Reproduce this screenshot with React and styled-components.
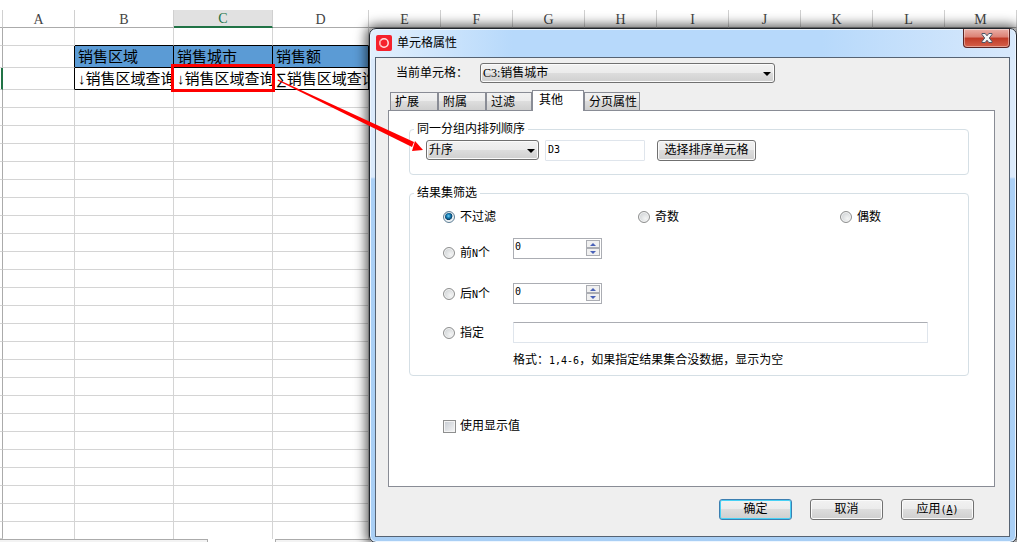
import React, { useState } from 'react'
import styled, { createGlobalStyle, css } from 'styled-components'

const columns = [
  { name: 'A', width: 72 },
  { name: 'B', width: 99 },
  { name: 'C', width: 99, active: true },
  { name: 'D', width: 96 },
  ...'EFGHIJKLM'.split('').map(name => ({ name, width: 72 }))
]

const headings = { B: '销售区域', C: '销售城市', D: '销售额' }
const formulas = { B: '↓销售区域查询', C: '↓销售区域查询', D: '∑销售区域查询' }
const emptyRows = Array.from({ length: 25 }, (_, i) => i)

const tabs = [
  { name: '扩展', width: 48 },
  { name: '附属', width: 48 },
  { name: '过滤', width: 46 },
  { name: '其他', width: 52 },
  { name: '分页属性', width: 56 }
]

const Sheet = () => (
  <SheetArea>
    <Grid>
      <colgroup>
        <col style={{ width: 3 }} />
        {columns.map(col => <col key={col.name} style={{ width: col.width }} />)}
      </colgroup>
      <thead>
        <tr>
          <ColumnHead />
          {columns.map(col => (
            <ColumnHead key={col.name} $active={col.active}>{col.name}</ColumnHead>
          ))}
        </tr>
      </thead>
      <tbody>
        <tr>
          <Stub />
          {columns.map(col => <Cell key={col.name} $dark={!!headings[col.name]} />)}
        </tr>
        <tr>
          <Stub />
          {columns.map(col => (
            <Cell key={col.name} $tall $filled={!!headings[col.name]} $dark={!!headings[col.name]} $edge={col.name in headings || col.name === 'A'}>
              <CellText>{headings[col.name]}</CellText>
            </Cell>
          ))}
        </tr>
        <tr>
          <Stub $active />
          {columns.map(col => (
            <Cell key={col.name} $tall $dark={!!formulas[col.name]} $edge={col.name in formulas || col.name === 'A'} $marked={col.active}>
              <CellText>{formulas[col.name]}</CellText>
            </Cell>
          ))}
        </tr>
        {emptyRows.map(row => (
          <tr key={row}>
            <Stub />
            {columns.map(col => <Cell key={col.name} $last={row === emptyRows.length - 1} />)}
          </tr>
        ))}
      </tbody>
    </Grid>
    <SheetTabs>
      <SheetTab $first />
      <SheetTab />
    </SheetTabs>
  </SheetArea>
)

const Combo = ({ id, label, width, options }) => (
  <ComboBox $width={width}>
    <select id={id} aria-label={label}>
      {options.map(option => <option key={option}>{option}</option>)}
    </select>
  </ComboBox>
)

const Spinner = ({ label }) => {
  const [value, setValue] = useState(0)

  return (
    <SpinBox>
      <input
        type="number"
        aria-label={label}
        value={value}
        onChange={e => setValue(Number(e.target.value))}
      />
      <SpinButtons>
        <SpinButton type="button" aria-label="增加" onClick={() => setValue(value + 1)}>
          <svg width="6" height="3" viewBox="0 0 6 3"><path d="M0 3 3 0 6 3z" /></svg>
        </SpinButton>
        <SpinButton type="button" aria-label="减少" onClick={() => setValue(Math.max(0, value - 1))}>
          <svg width="6" height="3" viewBox="0 0 6 3"><path d="M0 0h6L3 3z" /></svg>
        </SpinButton>
      </SpinButtons>
    </SpinBox>
  )
}

const Option = ({ value, filter, onSelect, children }) => (
  <Choice>
    <Radio name="filter" checked={filter === value} onChange={() => onSelect(value)} />
    <span>{children}</span>
  </Choice>
)

const CellDialog = () => {
  const [tab, setTab] = useState('其他')
  const [filter, setFilter] = useState('all')
  const option = { filter, onSelect: setFilter }

  return (
    <Dialog role="dialog" aria-labelledby="dialog-title">
      <TitleBar>
        <Logo viewBox="0 0 16 16" aria-hidden="true">
          <rect width="16" height="16" rx="2" fill="#f5222d" />
          <circle cx="8" cy="8" r="4.2" fill="none" stroke="#ffe3e3" strokeWidth="1.5" />
          <path d="M5.6 4.8a4 4 0 0 0 0 6.4" fill="none" stroke="#f88" strokeWidth="1" />
        </Logo>
        <Title id="dialog-title">单元格属性</Title>
        <Close type="button" aria-label="关闭">
          <svg width="12" height="10" viewBox="0 0 12 10">
            <path
              d="M1 .5h3.2L6 2.8 7.8.5H11v1L8.3 5 11 8.500v1H7.800L6 7.200 4.200 9.500H1v-1L3.700 5 1 1.500z"
              fill="#f4f4f4"
              stroke="#4c5566"
            />
          </svg>
        </Close>
      </TitleBar>
      <Client>
        <CurrentCell>
          <label htmlFor="current-cell">当前单元格：</label>
          <Combo id="current-cell" width={295} options={['C3:销售城市']} />
        </CurrentCell>
        <TabBar role="tablist">
          {tabs.map(({ name, width }) => (
            <Tab
              key={name}
              type="button"
              role="tab"
              aria-selected={tab === name}
              $width={width}
              $selected={tab === name}
              onClick={() => setTab(name)}
            >
              {name}
            </Tab>
          ))}
        </TabBar>
        <Panel>
          <Group>
            <legend>同一分组内排列顺序</legend>
            <SortRow>
              <Combo label="排列顺序" width={113} options={['升序', '降序']} />
              <TextInput $width={100} aria-label="排序单元格" defaultValue="D3" />
              <Button $width={99} type="button">选择排序单元格</Button>
            </SortRow>
          </Group>
          <Group>
            <legend>结果集筛选</legend>
            <Choices>
              <Option value="all" {...option}>不过滤</Option>
              <Option value="odd" {...option}>奇数</Option>
              <Option value="even" {...option}>偶数</Option>
            </Choices>
            <FieldRow $height={30} $gap={11}>
              <Option value="first" {...option}>前<Latin>N</Latin>个</Option>
              <Spinner label="前N个" />
            </FieldRow>
            <FieldRow $height={21} $gap={15}>
              <Option value="last" {...option}>后<Latin>N</Latin>个</Option>
              <Spinner label="后N个" />
            </FieldRow>
            <FieldRow $height={21} $gap={18}>
              <Option value="custom" {...option}>指定</Option>
              <TextInput $topped aria-label="指定" aria-describedby="format-hint" />
            </FieldRow>
            <Hint id="format-hint">格式：<Latin>1,4-6</Latin>，如果指定结果集合没数据，显示为空</Hint>
          </Group>
          <DisplayValue>
            <Checkbox />
            <span>使用显示值</span>
          </DisplayValue>
        </Panel>
        <Footer>
          <Button $width={73} $primary type="button">确定</Button>
          <Button $width={73} type="button">取消</Button>
          <Button $width={73} type="button">应用<Latin>(<u>A</u>)</Latin></Button>
        </Footer>
      </Client>
    </Dialog>
  )
}

const App = () => (
  <Desktop>
    <GlobalStyle />
    <Sheet />
    <CellDialog />
    {/* arrow from the marked cell to the sort order */}
    <Arrow viewBox="0 0 150 76" aria-hidden="true">
      <path d="M2 1.500 138 64 136 69 1.500 2.500z" />
      <path d="M139 63 147 72 136 73z" />
    </Arrow>
  </Desktop>
)

export default App

const GlobalStyle = createGlobalStyle`
  * {
    box-sizing: border-box;
  }
  body {
    margin: 0;
    background: #fff;
    color: #000;
    font: 12px/16px 'Liberation Serif', 'Noto Sans CJK SC', sans-serif;
  }
  button, input, select {
    font: inherit;
    color: inherit;
    margin: 0;
    padding: 0;
  }
`

const Desktop = styled.main`
  position: relative;
  height: 100vh;
  overflow: hidden;
`

const SheetArea = styled.div`
  padding-top: 10px;
`

const Grid = styled.table`
  table-layout: fixed;
  width: 100%;
  border-spacing: 0;
`

const ColumnHead = styled.th`
  height: 18px;
  padding: 2px 0 0;
  border-right: 1px solid #d0d0d0;
  border-bottom: 1px solid #ababab;
  color: #444;
  font: 14px/14px 'Liberation Serif', serif;
  ${props => props.$active && css`
    background: #e1e1e1;
    border-bottom: 2px solid #217346;
    color: #217346;
  `}
`

const Stub = styled.td`
  padding: 0;
  border-right: 1px solid ${props => props.$active ? '#217346' : '#ababab'};
  border-bottom: 1px solid #d4d4d4;
  ${props => props.$active && css`
    border-right-width: 2px;
  `}
`

const Cell = styled.td`
  position: relative;
  height: ${props => props.$tall ? 22 : 18}px;
  padding: 0;
  background: ${props => props.$filled ? '#5b9bd5' : 'transparent'};
  border-right: 1px solid ${props => props.$edge ? '#000' : '#d4d4d4'};
  border-bottom: 1px solid ${props => props.$dark ? '#000' : '#d4d4d4'};
  ${props => props.$last && css`
    height: 17px;
    border-bottom: none;
  `}
  ${props => props.$marked && css`
    &::after {
      content: '';
      position: absolute;
      z-index: 1;
      inset: -4px -3px -3px;
      border: 3px solid #f00;
    }
  `}
`

const CellText = styled.div`
  height: 20px;
  padding-left: 3px;
  overflow: hidden;
  white-space: nowrap;
  font: 15px/20px 'Liberation Sans', 'Noto Sans CJK SC', sans-serif;
`

const SheetTabs = styled.div`
  display: flex;
  gap: 67px;
  height: 10px;
`

const SheetTab = styled.div`
  flex: ${props => props.$first ? '0 0 208px' : '1'};
  background: #f3f3f3;
  border: 1px solid #ababab;
  border-width: ${props => props.$first ? '1px 1px 0 0' : '1px 0 0 1px'};
`

const Arrow = styled.svg`
  position: absolute;
  left: 276px;
  top: 78px;
  width: 150px;
  height: 76px;
  fill: #f00;
`

const Dialog = styled.section`
  position: absolute;
  left: 369px;
  right: 0;
  top: 28px;
  padding: 0 6px 5px 5px;
  border: 1px solid #20252c;
  border-radius: 7px;
  background:
    linear-gradient(90deg, #e3f0fd, #b7d9fb 22%, #b7d9fb 70%, #d8e9fc) 0 0 / 100% 30px no-repeat,
    linear-gradient(#dbeafb 148px, #abd0f6 150px, #a9cff5);
  box-shadow: inset 0 0 0 1px #edf6ff, 0 0 12px 3px rgba(0, 0, 0, 0.65);
`

const TitleBar = styled.header`
  display: flex;
  align-items: center;
  gap: 5px;
  height: 28px;
  padding-left: 1px;
`

const Logo = styled.svg`
  width: 16px;
  height: 16px;
`

const Title = styled.h1`
  flex: 1;
  margin: 0;
  font-size: 12px;
  font-weight: normal;
`

const Close = styled.button`
  align-self: flex-start;
  display: flex;
  align-items: center;
  justify-content: center;
  width: 47px;
  height: 19px;
  border: 1px solid #5a2424;
  border-top: none;
  border-radius: 0 0 4px 4px;
  background: linear-gradient(#eab0a8, #dc8074 45%, #bf3a27 50%, #d5604a);
  box-shadow: inset 0 0 0 1px rgba(255, 255, 255, 0.4);
`

const Client = styled.div`
  border: 1px solid #566373;
  background: #efefef;
`

const CurrentCell = styled.div`
  display: flex;
  align-items: center;
  padding: 5px 0 7px 20px;
  label {
    width: 84px;
  }
`

const face = css`
  border: 1px solid #707070;
  border-radius: 3px;
  background: linear-gradient(#f2f2f2, #ebebeb 50%, #dddddd 50%, #cfcfcf);
  box-shadow: inset 0 0 0 1px #fbfbfb;
`

const ComboBox = styled.div`
  position: relative;
  width: ${props => props.$width}px;
  height: 20px;
  select {
    ${face}
    display: block;
    width: 100%;
    height: 20px;
    padding-left: 2px;
    appearance: none;
  }
  &::after {
    content: '';
    position: absolute;
    right: 4px;
    top: 9px;
    border: 4px solid transparent;
    border-top-color: #000;
    border-bottom: none;
    pointer-events: none;
  }
`

const TabBar = styled.div`
  display: flex;
  align-items: flex-end;
  height: 20px;
  padding-left: 14px;
`

const Tab = styled.button`
  width: ${props => props.$width}px;
  height: 18px;
  padding-left: 4px;
  text-align: left;
  line-height: 16px;
  white-space: nowrap;
  border: 1px solid #898c95;
  border-bottom: none;
  background: linear-gradient(#f2f2f2, #ebebeb 50%, #dddddd 50%, #cfcfcf);
  ${props => props.$selected && css`
    position: relative;
    height: 21px;
    margin-bottom: -1px;
    padding: 0 0 2px 6px;
    background: #fff;
  `}
`

const Panel = styled.div`
  display: flex;
  flex-direction: column;
  gap: 10px;
  margin: 0 14px 0 12px;
  padding: 10px 25px 50px 20px;
  border: 1px solid #898c95;
  background: #fff;
`

const Group = styled.fieldset`
  min-width: 0;
  margin: 0;
  padding: 0;
  border: 1px solid #d5dfe5;
  border-radius: 4px;
  legend {
    margin-left: 4px;
    padding: 0 3px;
  }
`

const SortRow = styled.div`
  display: flex;
  padding: 3px 16px 13px;
  gap: 6px;
  button {
    margin-left: 6px;
  }
`

const TextInput = styled.input`
  flex: ${props => props.$width ? `0 0 ${props.$width}px` : '1'};
  min-width: 0;
  height: 21px;
  padding: 0 2px 2px;
  border: 1px solid #dfe5ec;
  border-top-color: ${props => props.$topped ? '#abadb3' : '#dfe5ec'};
  border-radius: 1px;
  font: 10px/16px 'DejaVu Sans Mono', monospace;
`

const Button = styled.button`
  ${face}
  width: ${props => props.$width}px;
  height: 21px;
  padding-bottom: 2px;
  line-height: 16px;
  white-space: nowrap;
  ${props => props.$primary && css`
    border-color: #3c7fb1;
    box-shadow: inset 0 0 0 1px #48d1f5;
  `}
`

const Choices = styled.div`
  display: grid;
  grid-template-columns: 195px 202px 1fr;
  height: 20px;
  margin: 6px 0 0 33px;
`

const Choice = styled.label`
  display: flex;
  align-items: center;
  gap: 5px;
`

const Radio = styled.input.attrs({ type: 'radio' })`
  appearance: none;
  width: 12px;
  height: 12px;
  border: 1px solid #8e8f8f;
  border-radius: 50%;
  background: radial-gradient(circle at 65% 65%, #f4f5f5, #c6cacd);
  box-shadow: inset 0 0 0 1px #f4f4f4;
  &:checked {
    border-color: #5f7f96;
    background: radial-gradient(circle at 45% 40%, #6fd0f5, #1379b0 25%, #0b3f66 45%, #e4eef4 52%);
  }
`

const FieldRow = styled.div`
  display: flex;
  height: ${props => props.$height}px;
  margin: ${props => props.$gap}px 40px 0 33px;
  label {
    width: 70px;
  }
`

const SpinBox = styled.div`
  display: flex;
  width: 89px;
  height: 21px;
  padding: 1px 1px 2px;
  border: 1px solid #abadb3;
  background: #fff;
  input {
    flex: 1;
    min-width: 0;
    height: 14px;
    border: none;
    outline: none;
    appearance: textfield;
    font: 10px/14px 'DejaVu Sans Mono', monospace;
  }
  input::-webkit-inner-spin-button {
    display: none;
  }
`

const SpinButtons = styled.div`
  display: grid;
  grid-template-rows: 1fr 1fr;
  width: 14px;
`

const SpinButton = styled.button`
  display: flex;
  align-items: center;
  justify-content: center;
  border: 1px solid #abadb3;
  background: #f0f0f0;
  svg {
    fill: #4a62b8;
  }
`

const Latin = styled.span`
  font: 10px/12px 'DejaVu Sans Mono', monospace;
`

const Hint = styled.p`
  margin: 9px 0 7px 103px;
`

const DisplayValue = styled.label`
  display: flex;
  align-items: center;
  align-self: flex-start;
  gap: 4px;
  height: 20px;
  margin: 30px 0 0 34px;
`

const Checkbox = styled.input.attrs({ type: 'checkbox' })`
  appearance: none;
  width: 13px;
  height: 13px;
  border: 1px solid #8e8f8f;
  background: linear-gradient(135deg, #c6cbd2, #f6f6f6);
  box-shadow: inset 0 0 0 1px #f4f4f4;
  &:checked {
    background: #1379b0;
  }
`

const Footer = styled.footer`
  display: flex;
  justify-content: flex-end;
  gap: 18px;
  padding: 12px 35px 16px;
`
